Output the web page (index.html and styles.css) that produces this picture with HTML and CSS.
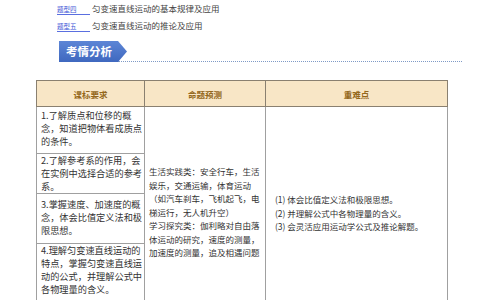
FILE: index.html
```html
<!DOCTYPE html>
<html lang="zh">
<head>
<meta charset="utf-8">
<link rel="stylesheet" href="styles.css">
</head>
<body>
<div class="page">
  <div class="links">
    <div class="link-row"><span class="tag">题型四</span><span class="desc">匀变速直线运动的基本规律及应用</span></div>
    <div class="link-row"><span class="tag">题型五</span><span class="desc">匀变速直线运动的推论及应用</span></div>
  </div>
  <div class="banner">
    <div class="banner-box">考情分析</div>
    <div class="banner-line"></div>
  </div>
  <table class="grid">
    <colgroup><col class="c1"><col class="c2"><col class="c3"></colgroup>
    <thead>
      <tr class="head"><th>课标要求</th><th>命题预测</th><th>重难点</th></tr>
    </thead>
    <tbody>
      <tr class="r1">
        <td class="req">1.了解质点和位移的概<br>念，知道把物体看成质点<br>的条件。</td>
        <td class="pred" rowspan="5">生活实践类：安全行车，生活<br>娱乐，交通运输，体育运动<br>（如汽车刹车，飞机起飞，电<br>梯运行，无人机升空）<br>学习探究类：伽利略对自由落<br>体运动的研究，速度的测量，<br>加速度的测量，追及相遇问题</td>
        <td class="key" rowspan="5">(1) 体会比值定义法和极限思想。<br>(2) 并理解公式中各物理量的含义。<br>(3) 会灵活应用运动学公式及推论解题。</td>
      </tr>
      <tr class="r2"><td class="req">2.了解参考系的作用，会<br>在实例中选择合适的参考<br>系。</td></tr>
      <tr class="r3"><td class="req">3.掌握速度、加速度的概<br>念，体会比值定义法和极<br>限思想。</td></tr>
      <tr class="r4"><td class="req">4.理解匀变速直线运动的<br>特点，掌握匀变速直线运<br>动的公式，并理解公式中<br>各物理量的含义。</td></tr>
      <tr class="r5"><td class="req">5.会灵活应用运动学公式<br>及推论解题。</td></tr>
    </tbody>
  </table>
</div>
</body>
</html>
```
FILE: styles.css
```css
html, body {
  margin: 0;
  padding: 0;
  background: #ffffff;
  overflow: hidden;
}
body {
  font-family: "Noto Sans CJK SC", "Noto Sans", sans-serif;
  color: #333;
}
.page {
  width: 484px;
  height: 300px;
  overflow: hidden;
  padding-left: 36px;
  box-sizing: border-box;
}
.links {
  padding-left: 21px;
  padding-top: 1px;
}
.link-row {
  display: flex;
  align-items: baseline;
  height: 17px;
  line-height: 14px;
}
.tag {
  display: inline-block;
  width: 33px;
  font-size: 6.5px;
  color: #3d55d6;
  border-bottom: 1px solid #5a6fe0;
  line-height: 9px;
}
.desc {
  font-size: 8.5px;
  color: #444;
  margin-left: 2px;
}
.banner {
  display: flex;
  align-items: flex-end;
  margin-left: 23px;
  width: 403px;
  margin-top: 5px;
  height: 22px;
}
.banner-box {
  width: 68px;
  height: 21px;
  flex: none;
  box-sizing: border-box;
  padding-left: 7px;
  background: linear-gradient(#5d86d6, #3f68bf);
  color: #fff;
  font-weight: bold;
  font-size: 11.5px;
  line-height: 21px;
  clip-path: polygon(0 0, 59px 0, 68px 50%, 59px 100%, 0 100%);
}
.banner-line {
  flex: 1;
  margin-left: -9px;
  border-bottom: 1.5px dotted #7f9ac6;
  height: 0;
}
.grid {
  margin-top: 18px;
  border-collapse: collapse;
  table-layout: fixed;
  width: 411px;
  border: 1px solid #8c8c8c;
}
.c1 { width: 108px; }
.c2 { width: 121px; }
.c3 { width: 182px; }
.head th {
  height: 25px;
  padding: 0;
  background: #f8e6c6;
  color: #94681c;
  font-size: 8.5px;
  font-weight: bold;
  border: 1px solid #8a8070;
  text-align: center;
  vertical-align: middle;
}
td {
  border: 1px solid #a0a0a0;
  padding: 0;
  vertical-align: top;
  white-space: nowrap;
  color: #333;
}
.req {
  font-size: 9.2px;
  line-height: 13px;
  padding: 2px 0 0 4px;
}
.r1 .req { height: 44px; }
.r2 .req { height: 36px; padding-top: 0; }
.r3 .req { height: 45px; padding-top: 4px; }
.r4 .req { height: 56px; padding-top: 0; }
.r5 .req { height: 40px; }
.pred {
  font-size: 8.5px;
  line-height: 13.5px;
  padding: 58px 0 0 4px;
}
.key {
  font-size: 8.5px;
  line-height: 13.5px;
  padding: 86px 0 0 9px;
}
```
